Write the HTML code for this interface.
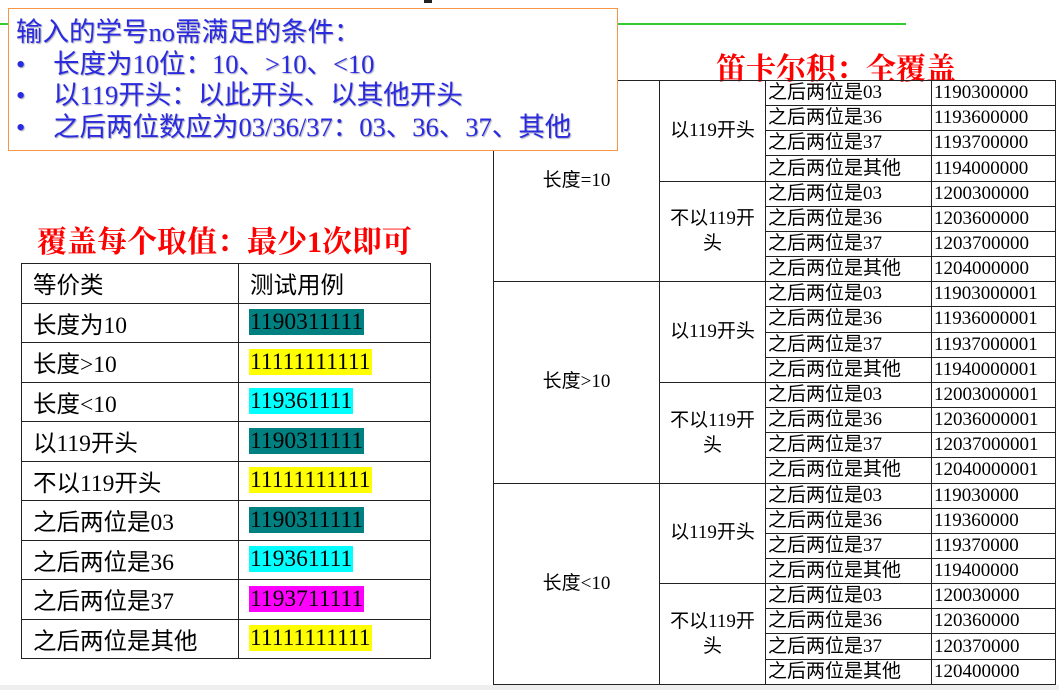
<!DOCTYPE html>
<html><head><meta charset="utf-8"><style>
body{margin:0;width:1059px;height:690px;background:#fff;position:relative;overflow:hidden;font-family:"Liberation Serif","Noto Sans CJK SC",serif;}
.abs{position:absolute}
#bot{left:0;top:685px;width:1059px;height:5px;background:#eee}
#green{left:0;top:23px;width:906px;height:2px;background:#3c3}
#box{left:8px;top:8px;width:610px;height:143px;border:1.5px solid #f79646;background:#fff;color:#2a2ae0;font-size:26.5px;line-height:31.5px;padding-top:8px;box-sizing:border-box;padding-left:7px;text-shadow:1px 1px 1px #aab;}
#box .b{display:flex}#box .b span:first-child{width:37px}
.red{color:#f00;font-weight:bold;font-size:30px;font-family:"Liberation Serif","Noto Serif CJK SC",serif;white-space:nowrap}
table{border-collapse:collapse;position:absolute;table-layout:fixed}
td{border:1.5px solid #222;padding:0 0 0 2px;white-space:nowrap;overflow:hidden}
#t1{left:21px;top:263px;width:409px;height:396px;font-size:23.5px}
#t1 td{padding-left:11px}
#t1 span{padding:0 1px;margin-left:-1px}
#t2{left:493px;top:80px;width:562px;height:605px;font-size:19px}
#t2 td{line-height:22px}
.c{text-align:center;padding:0}
</style></head><body>
<div class="abs" style="left:424px;top:0;width:8px;height:3px;background:#222"></div>
<div class="abs" id="green"></div>
<div class="abs" id="bot"></div>
<div class="abs red" style="left:716px;top:44px">笛卡尔积：全覆盖</div>
<table id="t2">
<colgroup><col style="width:166px"><col style="width:106px"><col style="width:166px"><col style="width:124px"></colgroup>
<tr><td rowspan="8" class="c">长度=10</td><td rowspan="4" class="c">以119开头</td><td>之后两位是03</td><td>1190300000</td></tr>
<tr><td>之后两位是36</td><td>1193600000</td></tr>
<tr><td>之后两位是37</td><td>1193700000</td></tr>
<tr><td>之后两位是其他</td><td>1194000000</td></tr>
<tr><td rowspan="4" class="c" style="line-height:25px">不以119开<br>头</td><td>之后两位是03</td><td>1200300000</td></tr>
<tr><td>之后两位是36</td><td>1203600000</td></tr>
<tr><td>之后两位是37</td><td>1203700000</td></tr>
<tr><td>之后两位是其他</td><td>1204000000</td></tr>
<tr><td rowspan="8" class="c">长度&gt;10</td><td rowspan="4" class="c">以119开头</td><td>之后两位是03</td><td>11903000001</td></tr>
<tr><td>之后两位是36</td><td>11936000001</td></tr>
<tr><td>之后两位是37</td><td>11937000001</td></tr>
<tr><td>之后两位是其他</td><td>11940000001</td></tr>
<tr><td rowspan="4" class="c" style="line-height:25px">不以119开<br>头</td><td>之后两位是03</td><td>12003000001</td></tr>
<tr><td>之后两位是36</td><td>12036000001</td></tr>
<tr><td>之后两位是37</td><td>12037000001</td></tr>
<tr><td>之后两位是其他</td><td>12040000001</td></tr>
<tr><td rowspan="8" class="c">长度&lt;10</td><td rowspan="4" class="c">以119开头</td><td>之后两位是03</td><td>119030000</td></tr>
<tr><td>之后两位是36</td><td>119360000</td></tr>
<tr><td>之后两位是37</td><td>119370000</td></tr>
<tr><td>之后两位是其他</td><td>119400000</td></tr>
<tr><td rowspan="4" class="c" style="line-height:25px">不以119开<br>头</td><td>之后两位是03</td><td>120030000</td></tr>
<tr><td>之后两位是36</td><td>120360000</td></tr>
<tr><td>之后两位是37</td><td>120370000</td></tr>
<tr><td>之后两位是其他</td><td>120400000</td></tr>
</table>
<div class="abs" id="box">
<div>输入的学号no需满足的条件：</div>
<div class="b"><span>•</span><span>长度为10位：10、&gt;10、&lt;10</span></div>
<div class="b"><span>•</span><span>以119开头：以此开头、以其他开头</span></div>
<div class="b"><span>•</span><span>之后两位数应为03/36/37：03、36、37、其他</span></div>
</div>
<div class="abs red" style="left:37px;top:217px">覆盖每个取值：最少1次即可</div>
<table id="t1">
<colgroup><col style="width:217px"><col style="width:192px"></colgroup>
<tr><td>等价类</td><td>测试用例</td></tr>
<tr><td>长度为10</td><td><span style="background:#008080">1190311111</span></td></tr>
<tr><td>长度&gt;10</td><td><span style="background:#ff0">11111111111</span></td></tr>
<tr><td>长度&lt;10</td><td><span style="background:#0ff">119361111</span></td></tr>
<tr><td>以119开头</td><td><span style="background:#008080">1190311111</span></td></tr>
<tr><td>不以119开头</td><td><span style="background:#ff0">11111111111</span></td></tr>
<tr><td>之后两位是03</td><td><span style="background:#008080">1190311111</span></td></tr>
<tr><td>之后两位是36</td><td><span style="background:#0ff">119361111</span></td></tr>
<tr><td>之后两位是37</td><td><span style="background:#f0f">1193711111</span></td></tr>
<tr><td>之后两位是其他</td><td><span style="background:#ff0">11111111111</span></td></tr>
</table>
</body></html>
